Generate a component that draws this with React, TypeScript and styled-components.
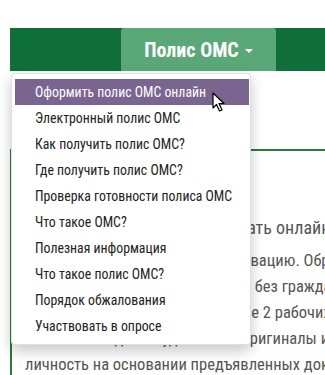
import styled, { createGlobalStyle } from "styled-components"

const GlobalStyle = createGlobalStyle`
    html, body {
        margin: 0;
        padding: 0;
        background: #ffffff;
        overflow: hidden;
    }
    body {
        font-family: "Roboto Condensed", "Liberation Sans Narrow", Roboto, "Liberation Sans", sans-serif;
    }
`

const Page = styled.div`
    position: relative;
    width: 325px;
    height: 375px;
    padding-top: 28px;
    box-sizing: border-box;
    overflow: hidden;
`

const NavBar = styled.nav`
    display: flex;
    height: 43px;
    margin-left: 10px;
    padding-left: 111px;
    background-color: #0f6f39;
`

const NavButton = styled.div`
    display: flex;
    align-items: center;
    justify-content: center;
    gap: 6px;
    width: 155px;
    border-radius: 3px 3px 0 0;
    background-color: #5aa878;
    color: #ffffff;
    font-size: 20px;
    font-weight: 700;
`

const Caret = styled.span`
    width: 0;
    height: 0;
    margin-top: 2px;
    border-left: 4.5px solid transparent;
    border-right: 4.5px solid transparent;
    border-top: 4.5px solid #ffffff;
`

const Article = styled.section`
    margin: 78px 0 0 10px;
    padding: 0 0 0 11px;
    border-left: 2px solid #2b7a36;
    border-top: 2px solid #2b7a36;
    height: 260px;
    color: #555555;
`

const Heading = styled.h3`
    margin: 65px 0 8px 0;
    font-size: 18px;
    font-weight: 400;
    white-space: nowrap;
    line-height: 24px;
`

const Line = styled.p<{ $indent?: boolean }>`
    margin: 0;
    padding-left: ${p => (p.$indent ? "2px" : "0")};
    font-size: 16.5px;
    line-height: 26px;
    white-space: nowrap;
`

const Menu = styled.ul`
    position: absolute;
    top: 73px;
    left: 11px;
    width: 240px;
    margin: 0;
    padding: 5px 1px 5px 3px;
    box-sizing: border-box;
    list-style: none;
    background: #ffffff;
    border: 1px solid rgba(0, 0, 0, 0.12);
    border-radius: 4px;
    box-shadow: 0 6px 14px rgba(0, 0, 0, 0.22);
`

const MenuItem = styled.li<{ $active?: boolean }>`
    height: 26px;
    line-height: 27px;
    padding-left: 20px;
    font-size: 13.8px;
    color: ${p => (p.$active ? "#ffffff" : "#222222")};
    background: ${p => (p.$active ? "#7a6590" : "transparent")};
    white-space: nowrap;
`

const Cursor = styled.svg`
    position: absolute;
    top: 92px;
    left: 212px;
`

const menuItems = [
    "Оформить полис ОМС онлайн",
    "Электронный полис ОМС",
    "Как получить полис ОМС?",
    "Где получить полис ОМС?",
    "Проверка готовности полиса ОМС",
    "Что такое ОМС?",
    "Полезная информация",
    "Что такое полис ОМС?",
    "Порядок обжалования",
    "Участвовать в опросе",
]

const lines = [
    "Подать заявку можно через активацию. Обратившись",
    "в страховую компанию, все лица без гражданства",
    "вы получите полис ОМС в течение 2 рабочих дней. С",
    "собой необходимо будет иметь оригиналы и копии",
]

export default function App() {
    return (
        <Page>
            <GlobalStyle />
            <NavBar>
                <NavButton>
                    Полис ОМС
                    <Caret />
                </NavButton>
            </NavBar>
            <Article>
                <Heading>Оформить полис ОМС и заказать онлайн</Heading>
                {lines.map(text => (
                    <Line key={text}>{text}</Line>
                ))}
                <Line $indent>личность на основании предъявленных документов</Line>
            </Article>
            <Menu>
                {menuItems.map((text, index) => (
                    <MenuItem key={text} $active={index === 0}>{text}</MenuItem>
                ))}
            </Menu>
            <Cursor width="14" height="21" viewBox="0 0 14 21">
                <path d="M1 1 L1 16 L4.5 12.5 L7.5 19 L10 18 L7 11.5 L12 11.5 Z" fill="#ffffff" stroke="#000000" strokeWidth="1.2" strokeLinejoin="round" />
            </Cursor>
        </Page>
    )
}
